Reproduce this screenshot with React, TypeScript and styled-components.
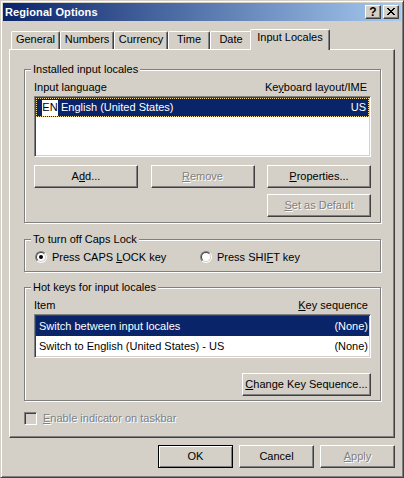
import React from 'react';
import styled, { createGlobalStyle, css } from 'styled-components';

const face = '#d4d0c8';
const shadow = '#808080';
const dark = '#404040';
const selection = '#0a246a';

const GlobalStyle = createGlobalStyle`
  * { box-sizing: border-box; }
  html, body {
    margin: 0;
    padding: 0;
    background: ${face};
  }
  body {
    font-family: "Liberation Sans", Arial, sans-serif;
    font-size: 11px;
    line-height: 13px;
    color: #000;
  }
`;

// --- window frame ---

const Window = styled.div`
  width: 404px;
  height: 478px;
  display: flex;
  flex-direction: column;
  padding: 2px;
  background: ${face};
  border: 1px solid;
  border-color: ${face} ${dark} ${dark} ${face};
  box-shadow: inset 1px 1px 0 #fff, inset -1px -1px 0 ${shadow};
`;

const TitleBar = styled.div`
  height: 18px;
  display: flex;
  align-items: center;
  padding: 0 2px 0 2px;
  background: linear-gradient(to right, #0a246a, #a6caf0);
`;

const Title = styled.span`
  color: #fff;
  font-weight: bold;
  font-size: 11px;
  letter-spacing: 0.1px;
`;

const CaptionButtons = styled.div`
  margin-left: auto;
  display: flex;
  gap: 2px;
`;

const CaptionButton = styled.div`
  width: 16px;
  height: 14px;
  display: flex;
  align-items: center;
  justify-content: center;
  background: ${face};
  border: 1px solid;
  border-color: #fff ${dark} ${dark} #fff;
  box-shadow: inset -1px -1px 0 ${shadow};
  font-weight: bold;
  font-size: 12px;
  line-height: 12px;
  padding-bottom: 1px;
`;

const Body = styled.div`
  flex: 1;
  display: flex;
  flex-direction: column;
  padding: 8px 6px 7px;
`;

// --- tabs ---

const TabStrip = styled.div`
  height: 20px;
  display: flex;
  align-items: flex-end;
  padding-left: 2px;
`;

const Tab = styled.div<{ $active?: boolean; $w: number }>`
  width: ${(p) => p.$w}px;
  height: 18px;
  padding-top: 1px;
  text-align: center;
  background: ${face};
  border-top: 1px solid #fff;
  border-left: 1px solid #fff;
  border-right: 1px solid ${dark};
  border-radius: 2px 2px 0 0;
  box-shadow: inset -1px 0 0 ${shadow};
  ${(p) =>
    p.$active &&
    css`
      width: ${p.$w + 4}px;
      height: 21px;
      margin: 0 -2px -1px -2px;
      position: relative;
      z-index: 1;
    `}
`;

const Panel = styled.div`
  flex: 1;
  display: flex;
  flex-direction: column;
  align-items: flex-start;
  padding: 13px 14px 0;
  border: 1px solid;
  border-color: #fff ${dark} ${dark} #fff;
  box-shadow: inset -1px -1px 0 ${shadow};
`;

// --- group boxes ---

const Group = styled.fieldset<{ $pad: string; $top?: number }>`
  width: 357px;
  min-inline-size: 0;
  margin: ${(p) => p.$top ?? 0}px 0 0;
  padding: ${(p) => p.$pad};
  border: 1px solid ${shadow};
  box-shadow: inset 1px 1px 0 #fff, 1px 1px 0 #fff;
  display: flex;
  flex-direction: column;
`;

const Legend = styled.legend`
  padding: 0 2px;
  margin-left: -3px;
  line-height: 13px;
  background: ${face};
`;

const ColumnHeader = styled.div<{ $right: number }>`
  height: 13px;
  display: flex;
  justify-content: space-between;
  padding-right: ${(p) => p.$right}px;
  margin-bottom: 2px;
`;

const ListBox = styled.div<{ $h: number }>`
  height: ${(p) => p.$h}px;
  padding: 1px;
  background: #fff;
  border: 1px solid;
  border-color: ${shadow} #fff #fff ${shadow};
  box-shadow: inset 1px 1px 0 ${dark}, inset -1px -1px 0 ${face};
`;

const Row = styled.div<{ $selected?: boolean; $focus?: boolean }>`
  display: flex;
  align-items: center;
  justify-content: space-between;
  background: ${(p) => (p.$selected ? selection : '#fff')};
  color: ${(p) => (p.$selected ? '#fff' : '#000')};
  ${(p) =>
    p.$focus &&
    css`
      outline: 1px dotted #f5db95;
      outline-offset: -1px;
    `}
`;

const LocaleRow = styled(Row)`
  height: 19px;
  padding: 0 3px 0 6px;
`;

const HotkeyRow = styled(Row)`
  height: 20px;
  padding: 0 1px 0 3px;
`;

const LocaleName = styled.span`
  display: flex;
  align-items: center;
  gap: 3px;
`;

const LangBadge = styled.span`
  width: 16px;
  height: 16px;
  display: inline-flex;
  align-items: center;
  justify-content: center;
  background: #fff;
  color: #000;
`;

// --- buttons ---

const Button = styled.button<{ $w: number; $default?: boolean }>`
  width: ${(p) => p.$w}px;
  height: 23px;
  padding: 0;
  font: inherit;
  color: #000;
  background: ${face};
  border: 1px solid;
  border-color: #fff ${dark} ${dark} #fff;
  box-shadow: inset -1px -1px 0 ${shadow};
  ${(p) =>
    p.$default &&
    css`
      border-color: #000;
      box-shadow: inset 1px 1px 0 #fff, inset -1px -1px 0 ${shadow};
    `}
  &:disabled {
    color: ${shadow};
    text-shadow: 1px 1px 0 #fff;
  }
`;

const ButtonRow = styled.div<{ $top: number; $end?: boolean }>`
  display: flex;
  justify-content: ${(p) => (p.$end ? 'flex-end' : 'space-between')};
  margin-top: ${(p) => p.$top}px;
`;

// --- radios and checkbox ---

const RadioRow = styled.div`
  height: 14px;
  display: grid;
  grid-template-columns: 165px auto;
  align-items: center;
  padding-left: 1px;
`;

const Choice = styled.label<{ $disabled?: boolean; $gap: number }>`
  display: flex;
  align-items: center;
  gap: ${(p) => p.$gap}px;
  ${(p) =>
    p.$disabled &&
    css`
      color: ${shadow};
      text-shadow: 1px 1px 0 #fff;
    `}
`;

const RadioOuter = styled.span`
  width: 12px;
  height: 12px;
  display: flex;
  border-radius: 50%;
  border: 1px solid;
  border-color: ${shadow} #fff #fff ${shadow};
`;

const RadioInner = styled.span<{ $checked?: boolean }>`
  flex: 1;
  display: flex;
  align-items: center;
  justify-content: center;
  border-radius: 50%;
  border: 1px solid;
  border-color: ${dark} ${face} ${face} ${dark};
  background: #fff;
  &::after {
    content: '';
    width: 4px;
    height: 4px;
    border-radius: 50%;
    background: #000;
    display: ${(p) => (p.$checked ? 'block' : 'none')};
  }
`;

const CheckBox = styled.span`
  width: 13px;
  height: 13px;
  background: ${face};
  border: 1px solid;
  border-color: ${shadow} #fff #fff ${shadow};
  box-shadow: inset 1px 1px 0 ${dark}, inset -1px -1px 0 ${face};
`;

const CheckRow = styled.div`
  margin-top: 11px;
`;

const Footer = styled.div`
  display: flex;
  justify-content: flex-end;
  gap: 6px;
  margin-top: 7px;
`;

const CloseGlyph = () => (
  <svg width="8" height="7" viewBox="0 0 8 7">
    <path
      d="M0 0h2v1H0zM6 0h2v1H6zM1 1h2v1H1zM5 1h2v1H5zM2 2h4v1H2zM3 3h2v1H3zM2 4h4v1H2zM1 5h2v1H1zM5 5h2v1H5zM0 6h2v1H0zM6 6h2v1H6z"
      fill="#000"
    />
  </svg>
);

const tabs: [string, number][] = [
  ['General', 49],
  ['Numbers', 54],
  ['Currency', 54],
  ['Time', 42],
  ['Date', 42],
  ['Input Locales', 76],
];

export default function App() {
  return (
    <>
      <GlobalStyle />
      <Window>
        <TitleBar>
          <Title>Regional Options</Title>
          <CaptionButtons>
            <CaptionButton>?</CaptionButton>
            <CaptionButton>
              <CloseGlyph />
            </CaptionButton>
          </CaptionButtons>
        </TitleBar>

        <Body>
          <TabStrip>
            {tabs.map(([label, w]) => (
              <Tab key={label} $w={w} $active={label === 'Input Locales'}>
                {label}
              </Tab>
            ))}
          </TabStrip>

          <Panel>
            <Group $pad="5px 9px 5px">
              <Legend>Installed input locales</Legend>
              <ColumnHeader $right={4}>
                <span>Input language</span>
                <span>
                  Ke<u>y</u>board layout/IME
                </span>
              </ColumnHeader>
              <ListBox $h={61}>
                <LocaleRow $selected $focus>
                  <LocaleName>
                    <LangBadge>EN</LangBadge>
                    <span>English (United States)</span>
                  </LocaleName>
                  <span>US</span>
                </LocaleRow>
              </ListBox>
              <ButtonRow $top={8}>
                <Button $w={104}>
                  A<u>d</u>d...
                </Button>
                <Button $w={104} disabled>
                  <u>R</u>emove
                </Button>
                <Button $w={104}>
                  <u>P</u>roperties...
                </Button>
              </ButtonRow>
              <ButtonRow $top={6} $end>
                <Button $w={104} disabled>
                  <u>S</u>et as Default
                </Button>
              </ButtonRow>
            </Group>

            <Group $pad="4px 9px 7px" $top={10}>
              <Legend>To turn off Caps Lock</Legend>
              <RadioRow>
                <Choice $gap={5}>
                  <RadioOuter>
                    <RadioInner $checked />
                  </RadioOuter>
                  <span>
                    Press CAPS <u>L</u>OCK key
                  </span>
                </Choice>
                <Choice $gap={5}>
                  <RadioOuter>
                    <RadioInner />
                  </RadioOuter>
                  <span>
                    Press SHI<u>F</u>T key
                  </span>
                </Choice>
              </RadioRow>
            </Group>

            <Group $pad="5px 9px 4px" $top={9}>
              <Legend>Hot keys for input locales</Legend>
              <ColumnHeader $right={3}>
                <span>Item</span>
                <span>
                  <u>K</u>ey sequence
                </span>
              </ColumnHeader>
              <ListBox $h={44}>
                <HotkeyRow $selected>
                  <span>Switch between input locales</span>
                  <span>(None)</span>
                </HotkeyRow>
                <HotkeyRow>
                  <span>Switch to English (United States) - US</span>
                  <span>(None)</span>
                </HotkeyRow>
              </ListBox>
              <ButtonRow $top={15} $end>
                <Button $w={129}>
                  <u>C</u>hange Key Sequence...
                </Button>
              </ButtonRow>
            </Group>

            <CheckRow>
              <Choice $disabled $gap={6}>
                <CheckBox />
                <span>
                  <u>E</u>nable indicator on taskbar
                </span>
              </Choice>
            </CheckRow>
          </Panel>

          <Footer>
            <Button $w={75} $default>
              OK
            </Button>
            <Button $w={75}>Cancel</Button>
            <Button $w={75} disabled>
              <u>A</u>pply
            </Button>
          </Footer>
        </Body>
      </Window>
    </>
  );
}
